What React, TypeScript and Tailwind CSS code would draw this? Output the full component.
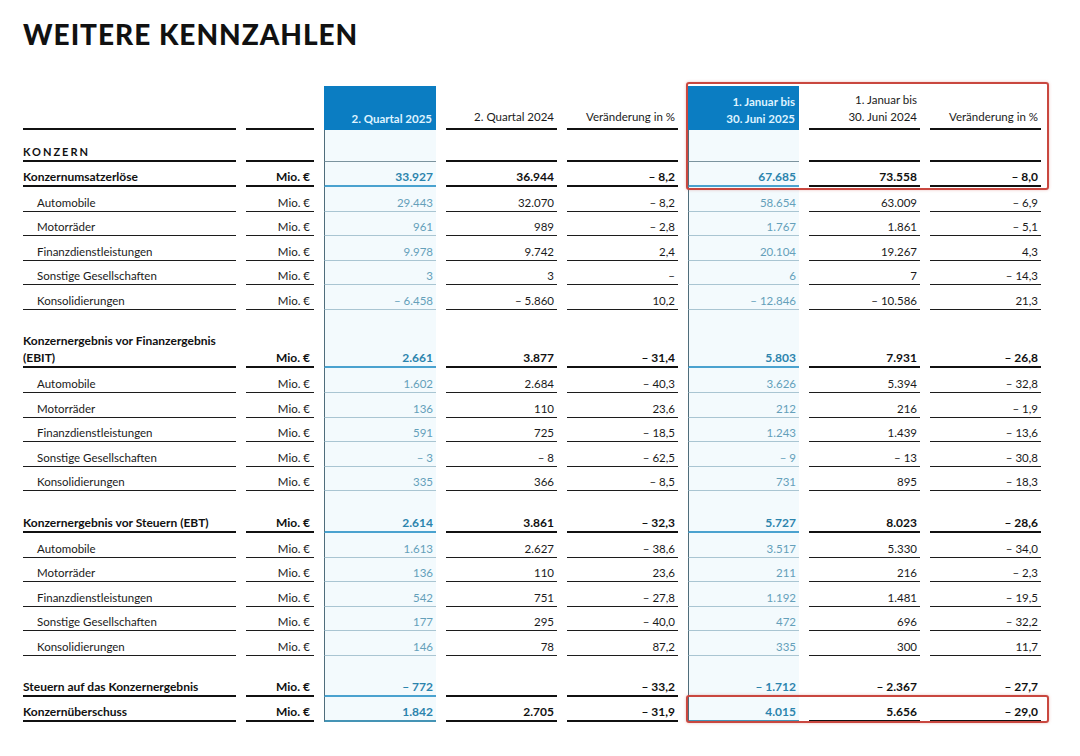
type Kind = "konzern" | "bold" | "sub" | "spacer" | "bold2";

type Row = {
  kind: Kind;
  label?: string;
  label2?: string;
  unit?: string;
  values?: string[];
};

const grid =
  "grid grid-cols-[213px_68px_112px_111px_111px_111px_111px_111px] gap-x-[10px]";

const sub = (label: string, values: string[]): Row => ({ kind: "sub", label, unit: "Mio. €", values });

const rows: Row[] = [
  { kind: "konzern", label: "KONZERN" },
  { kind: "bold", label: "Konzernumsatzerlöse", unit: "Mio. €", values: ["33.927", "36.944", "– 8,2", "67.685", "73.558", "– 8,0"] },
  sub("Automobile", ["29.443", "32.070", "– 8,2", "58.654", "63.009", "– 6,9"]),
  sub("Motorräder", ["961", "989", "– 2,8", "1.767", "1.861", "– 5,1"]),
  sub("Finanzdienstleistungen", ["9.978", "9.742", "2,4", "20.104", "19.267", "4,3"]),
  sub("Sonstige Gesellschaften", ["3", "3", "–", "6", "7", "– 14,3"]),
  sub("Konsolidierungen", ["– 6.458", "– 5.860", "10,2", "– 12.846", "– 10.586", "21,3"]),
  { kind: "spacer" },
  { kind: "bold2", label: "Konzernergebnis vor Finanzergebnis", label2: "(EBIT)", unit: "Mio. €", values: ["2.661", "3.877", "– 31,4", "5.803", "7.931", "– 26,8"] },
  sub("Automobile", ["1.602", "2.684", "– 40,3", "3.626", "5.394", "– 32,8"]),
  sub("Motorräder", ["136", "110", "23,6", "212", "216", "– 1,9"]),
  sub("Finanzdienstleistungen", ["591", "725", "– 18,5", "1.243", "1.439", "– 13,6"]),
  sub("Sonstige Gesellschaften", ["– 3", "– 8", "– 62,5", "– 9", "– 13", "– 30,8"]),
  sub("Konsolidierungen", ["335", "366", "– 8,5", "731", "895", "– 18,3"]),
  { kind: "spacer" },
  { kind: "bold", label: "Konzernergebnis vor Steuern (EBT)", unit: "Mio. €", values: ["2.614", "3.861", "– 32,3", "5.727", "8.023", "– 28,6"] },
  sub("Automobile", ["1.613", "2.627", "– 38,6", "3.517", "5.330", "– 34,0"]),
  sub("Motorräder", ["136", "110", "23,6", "211", "216", "– 2,3"]),
  sub("Finanzdienstleistungen", ["542", "751", "– 27,8", "1.192", "1.481", "– 19,5"]),
  sub("Sonstige Gesellschaften", ["177", "295", "– 40,0", "472", "696", "– 32,2"]),
  sub("Konsolidierungen", ["146", "78", "87,2", "335", "300", "11,7"]),
  { kind: "spacer" },
  { kind: "bold", label: "Steuern auf das Konzernergebnis", unit: "Mio. €", values: ["– 772", "", "– 33,2", "– 1.712", "– 2.367", "– 27,7"] },
  { kind: "bold", label: "Konzernüberschuss", unit: "Mio. €", values: ["1.842", "2.705", "– 31,9", "4.015", "5.656", "– 29,0"] },
];

function rowHeight(kind: Kind) {
  if (kind === "konzern") return "h-[32px]";
  if (kind === "bold2") return "h-[42px]";
  if (kind === "spacer") return "h-[16.5px]";
  if (kind === "bold") return "h-[25px]";
  return "h-[24.6px]";
}

function line(kind: Kind, blue: boolean, last: boolean) {
  if (kind === "spacer") return "";
  if (blue) {
    if (last) return "border-b-2 border-b-[#4594b5]";
    if (kind === "konzern") return "border-b border-b-[#7b939e]";
    if (kind === "sub") return "border-b border-b-[#a9c5d2]";
    return "border-b-2 border-b-[#4aa2cf]";
  }
  if (kind === "sub") return "border-b border-b-[#1c1c1c]";
  return "border-b-2 border-b-[#111]";
}

function TableRow({ row, last }: { row: Row; last: boolean }) {
  const { kind } = row;
  const isBold = kind !== "sub";
  const h = rowHeight(kind);
  const cells = [];
  for (let i = 0; i < 6; i++) {
    const blue = i === 0 || i === 3;
    const v = row.values?.[i] ?? "";
    cells.push(
      <div
        key={i}
        className={`flex items-end justify-end pr-[3px] pb-[2px] ${line(kind, blue, last)} ${
          blue ? "bg-[#f3fafd] border-l border-l-[#4f6d7b]" : ""
        } ${
          blue
            ? isBold
              ? "font-bold text-[12px] text-[#2c84ad]"
              : "text-[#64a0ba]"
            : isBold
            ? "font-bold text-[12px] text-[#111]"
            : "text-[#1a1a1a]"
        }`}
      >
        {v}
      </div>
    );
  }
  return (
    <div className={`${grid} ${h} leading-[13px]`}>
      <div
        className={`flex flex-col justify-end pb-[2px] ${line(kind, false, last)} ${
          kind === "sub" ? "pl-[14px] text-[#1a1a1a]" : "font-bold text-[#111]"
        } ${kind === "konzern" ? "tracking-[0.18em] text-[11px]" : kind === "sub" ? "" : "text-[12px]"}`}
      >
        {row.label2 ? (
          <>
            <span className="leading-[21px]">{row.label}</span>
            <span>{row.label2}</span>
          </>
        ) : (
          row.label
        )}
      </div>
      <div
        className={`flex items-end justify-end pr-[4px] pb-[2px] ${line(kind, false, last)} ${
          isBold ? "font-bold text-[12px] text-[#111]" : "text-[#1a1a1a]"
        }`}
      >
        {row.unit}
      </div>
      {cells}
    </div>
  );
}

function Header() {
  return (
    <div className={`${grid} h-[44px] text-[11.5px] leading-[17px]`}>
      <div className="border-b-2 border-b-[#111]" />
      <div className="border-b-2 border-b-[#111]" />
      <div className="flex items-end justify-end bg-[#0b7dc2] pr-[4px] pb-[3px] font-bold text-[#dff3ff]">
        2. Quartal 2025
      </div>
      <div className="flex items-end justify-end border-b-2 border-b-[#111] pr-[3px] pb-[3px] text-[#1a1a1a]">
        2. Quartal 2024
      </div>
      <div className="flex items-end justify-end border-b-2 border-b-[#111] pr-[3px] pb-[3px] text-[#1a1a1a]">
        Veränderung in %
      </div>
      <div className="flex flex-col items-end justify-end bg-[#0b7dc2] pr-[4px] pb-[3px] font-bold text-[#dff3ff]">
        <span>1. Januar bis</span>
        <span>30. Juni 2025</span>
      </div>
      <div className="flex flex-col items-end justify-end border-b-2 border-b-[#111] pr-[3px] pb-[3px] text-[#1a1a1a]">
        <span>1. Januar bis</span>
        <span>30. Juni 2024</span>
      </div>
      <div className="flex items-end justify-end border-b-2 border-b-[#111] pr-[3px] pb-[3px] text-[#1a1a1a]">
        Veränderung in %
      </div>
    </div>
  );
}

export default function App() {
  return (
    <div
      className="w-[1080px] h-[756px] bg-white overflow-hidden pl-[23px] pt-[17px]"
      style={{ fontFamily: "Lato, 'Open Sans', sans-serif" }}
    >
      <h1 className="text-[28px] leading-[34px] font-black tracking-[0.035em] text-[#111]">
        WEITERE KENNZAHLEN
      </h1>

      <div className="relative mt-[35px] text-[11.5px]">
        <Header />
        {rows.map((r, i) => (
          <TableRow key={i} row={r} last={i === rows.length - 1} />
        ))}

        {/* highlight boxes */}
        <div className="absolute left-[663px] top-[-4px] w-[363px] h-[108px] rounded-[3px] border-2 border-[#c9473f] shadow-[0_0_3px_rgba(201,71,63,0.35)]" />
        <div className="absolute left-[663px] top-[609px] w-[363px] h-[28px] rounded-[3px] border-2 border-[#c9473f] shadow-[0_0_3px_rgba(201,71,63,0.35)]" />
      </div>
    </div>
  );
}
